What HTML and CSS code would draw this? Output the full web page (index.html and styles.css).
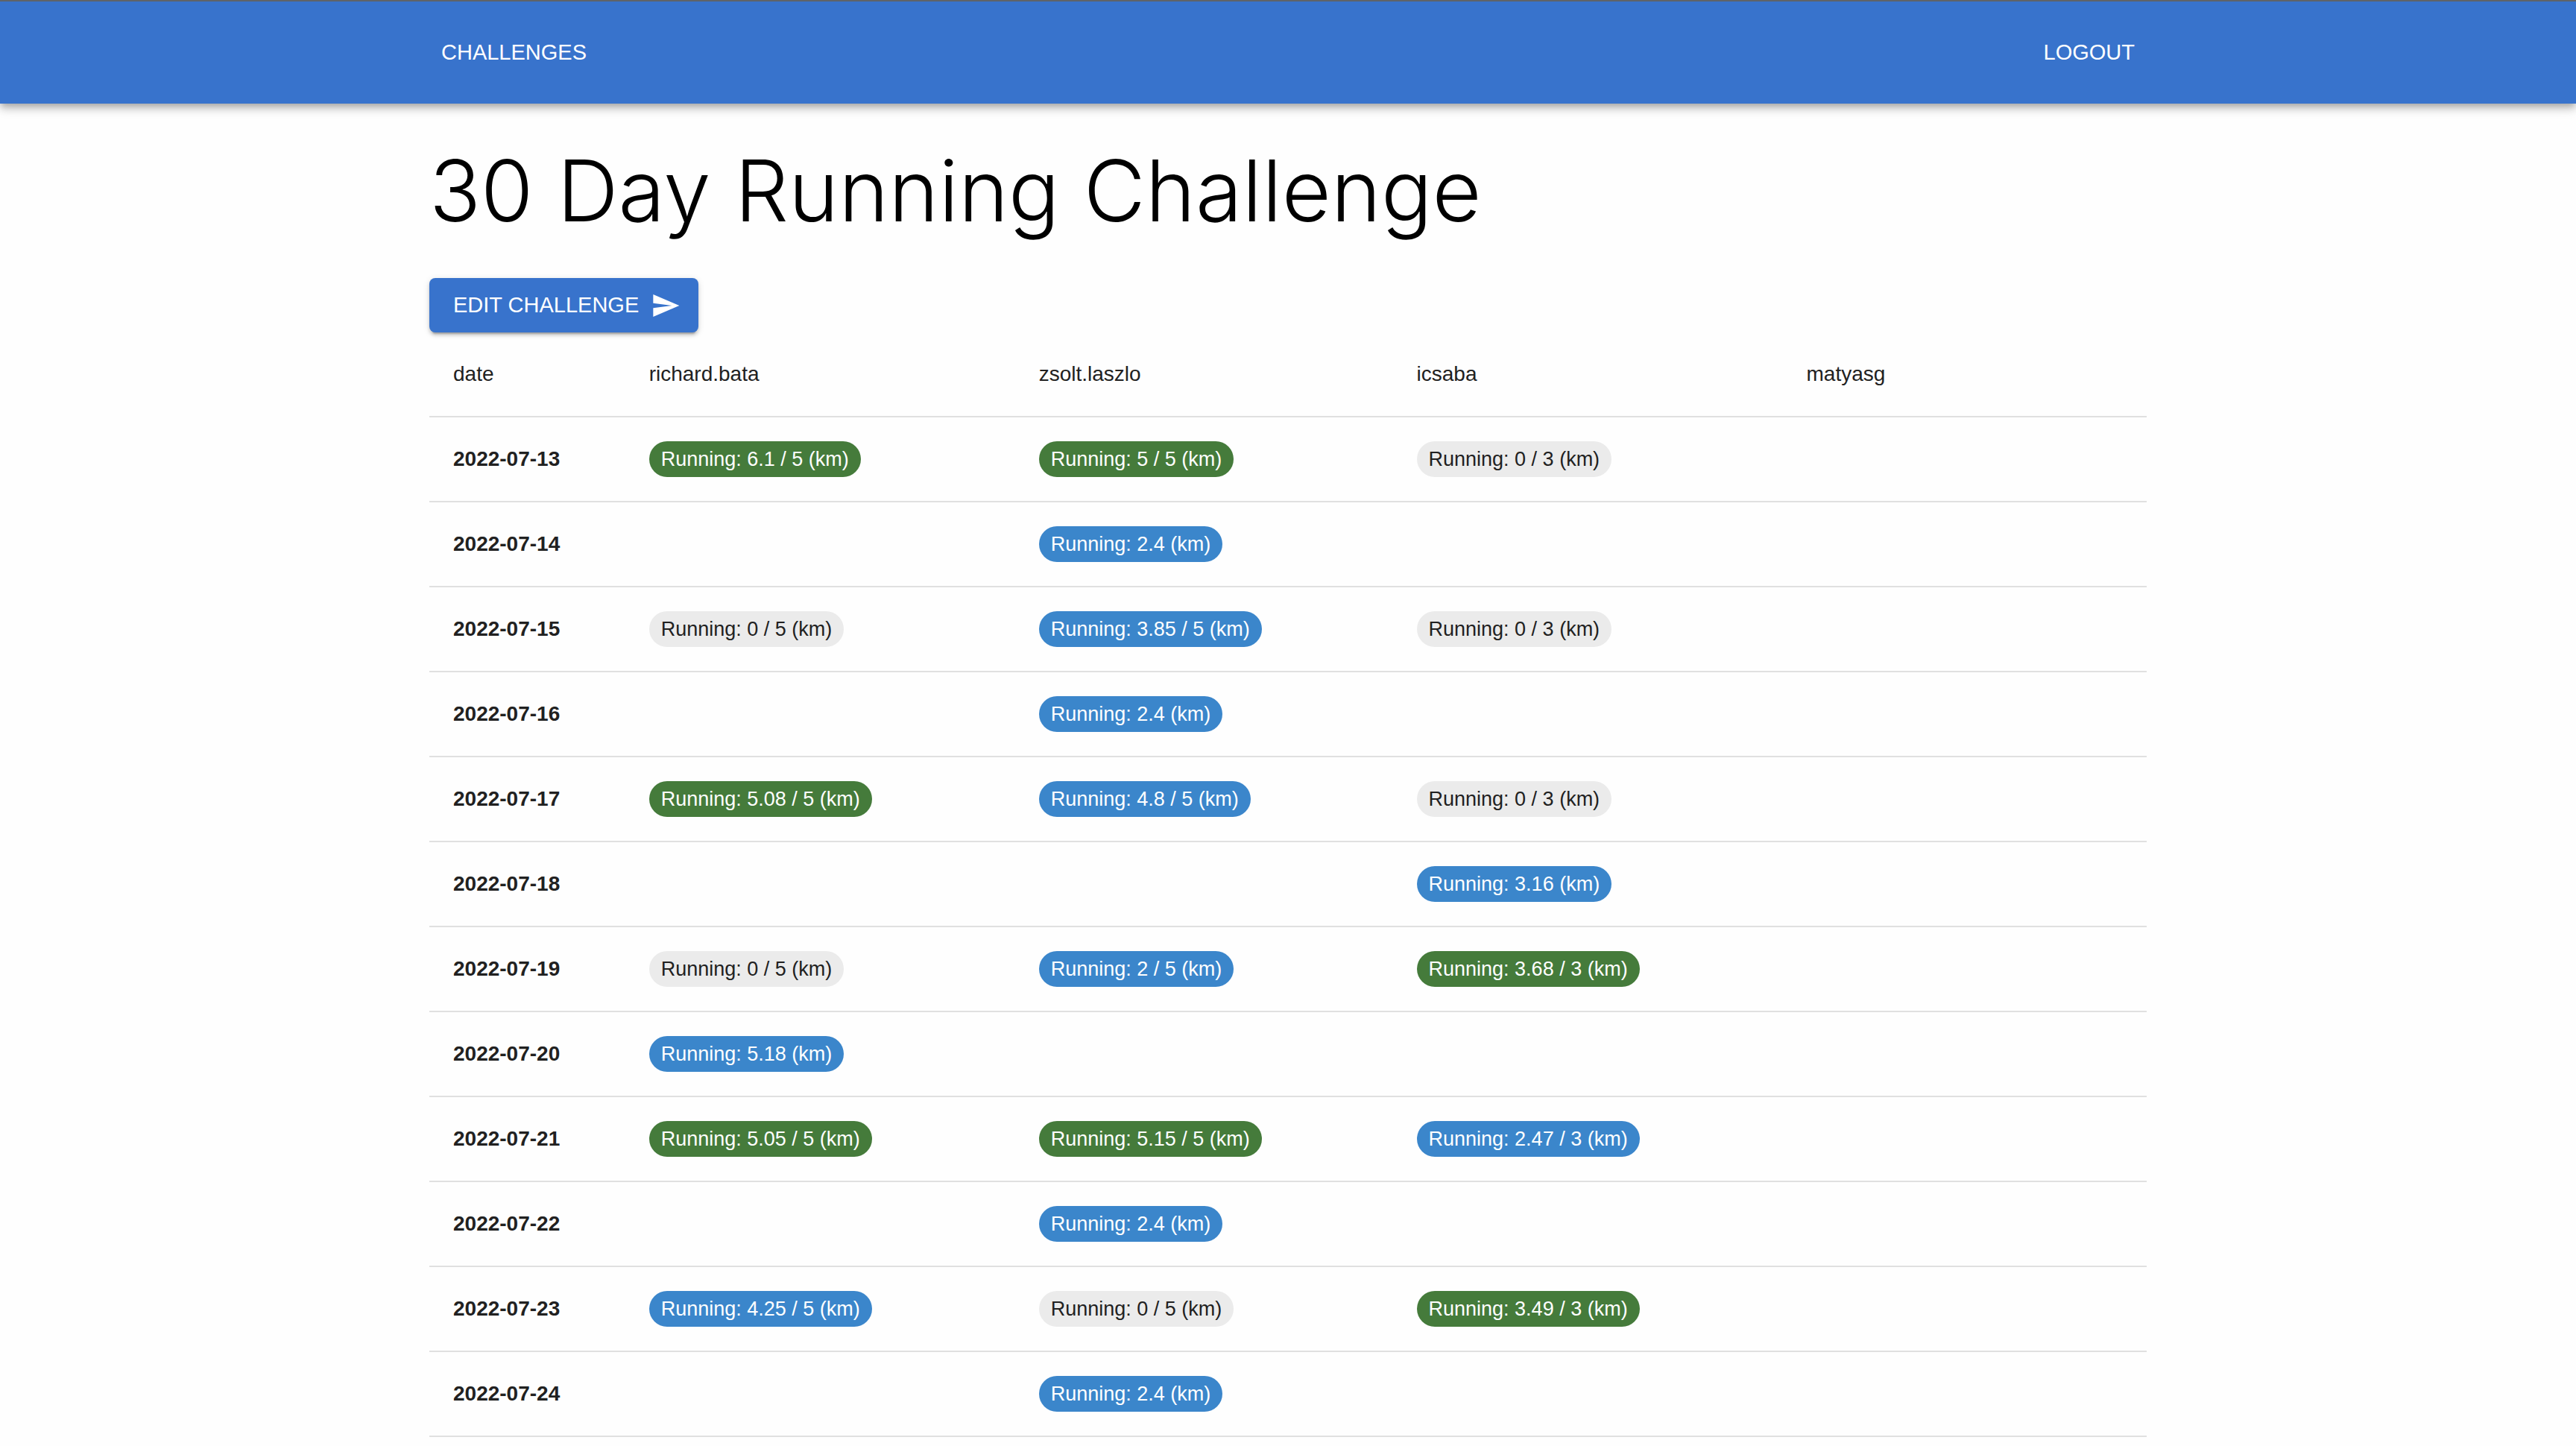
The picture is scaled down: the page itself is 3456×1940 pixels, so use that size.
FILE: index.html
```html
<!DOCTYPE html>
<html lang="en">
<head>
  <meta charset="utf-8">
  <meta name="viewport" content="width=device-width, initial-scale=1">
  <title>30 Day Running Challenge</title>
  <link rel="stylesheet" href="styles.css">
</head>
<body>
  <header class="app-bar">
    <nav class="container app-bar__nav">
      <a class="nav-link" href="#challenges">CHALLENGES</a>
      <a class="nav-link" href="#logout">LOGOUT</a>
    </nav>
  </header>
  <main class="container content">
    <h1 class="title">30 Day Running Challenge</h1>
    <button class="button" type="button">
      EDIT CHALLENGE
      <svg class="button__icon" viewBox="0 0 24 24" aria-hidden="true"><path d="M2.01 21 23 12 2.01 3 2 10l15 2-15 2z"/></svg>
    </button>
    <table class="log">
      <colgroup>
        <col class="col-date">
        <col class="col-wide">
        <col class="col-mid">
        <col class="col-wide">
        <col>
      </colgroup>
      <thead>
        <tr><th scope="col">date</th><th scope="col">richard.bata</th><th scope="col">zsolt.laszlo</th><th scope="col">icsaba</th><th scope="col">matyasg</th></tr>
      </thead>
      <tbody>
        <tr><th scope="row">2022-07-13</th><td><span class="chip chip--done">Running: 6.1 / 5 (km)</span></td><td><span class="chip chip--done">Running: 5 / 5 (km)</span></td><td><span class="chip">Running: 0 / 3 (km)</span></td><td></td></tr>
        <tr><th scope="row">2022-07-14</th><td></td><td><span class="chip chip--partial">Running: 2.4 (km)</span></td><td></td><td></td></tr>
        <tr><th scope="row">2022-07-15</th><td><span class="chip">Running: 0 / 5 (km)</span></td><td><span class="chip chip--partial">Running: 3.85 / 5 (km)</span></td><td><span class="chip">Running: 0 / 3 (km)</span></td><td></td></tr>
        <tr><th scope="row">2022-07-16</th><td></td><td><span class="chip chip--partial">Running: 2.4 (km)</span></td><td></td><td></td></tr>
        <tr><th scope="row">2022-07-17</th><td><span class="chip chip--done">Running: 5.08 / 5 (km)</span></td><td><span class="chip chip--partial">Running: 4.8 / 5 (km)</span></td><td><span class="chip">Running: 0 / 3 (km)</span></td><td></td></tr>
        <tr><th scope="row">2022-07-18</th><td></td><td></td><td><span class="chip chip--partial">Running: 3.16 (km)</span></td><td></td></tr>
        <tr><th scope="row">2022-07-19</th><td><span class="chip">Running: 0 / 5 (km)</span></td><td><span class="chip chip--partial">Running: 2 / 5 (km)</span></td><td><span class="chip chip--done">Running: 3.68 / 3 (km)</span></td><td></td></tr>
        <tr><th scope="row">2022-07-20</th><td><span class="chip chip--partial">Running: 5.18 (km)</span></td><td></td><td></td><td></td></tr>
        <tr><th scope="row">2022-07-21</th><td><span class="chip chip--done">Running: 5.05 / 5 (km)</span></td><td><span class="chip chip--done">Running: 5.15 / 5 (km)</span></td><td><span class="chip chip--partial">Running: 2.47 / 3 (km)</span></td><td></td></tr>
        <tr><th scope="row">2022-07-22</th><td></td><td><span class="chip chip--partial">Running: 2.4 (km)</span></td><td></td><td></td></tr>
        <tr><th scope="row">2022-07-23</th><td><span class="chip chip--partial">Running: 4.25 / 5 (km)</span></td><td><span class="chip">Running: 0 / 5 (km)</span></td><td><span class="chip chip--done">Running: 3.49 / 3 (km)</span></td><td></td></tr>
        <tr><th scope="row">2022-07-24</th><td></td><td><span class="chip chip--partial">Running: 2.4 (km)</span></td><td></td><td></td></tr>
      </tbody>
    </table>
  </main>
</body>
</html>
```
FILE: styles.css
```css
* {
  box-sizing: border-box;
}

body {
  margin: 0;
  background: #fefefe;
  color: #212121;
  font-family: "Liberation Sans", Arial, sans-serif;
  font-size: 28px;
  line-height: 48px;
}

.container {
  max-width: 2304px;
  margin: 0 auto;
}

.app-bar {
  padding: 32px 0;
  border-top: 2px solid #5f6368;
  background: #3873cc;
  box-shadow:
    0 4px 8px -2px rgba(0, 0, 0, 0.2),
    0 8px 10px 0 rgba(0, 0, 0, 0.14),
    0 2px 20px 0 rgba(0, 0, 0, 0.12);
}

.app-bar__nav {
  display: flex;
  justify-content: space-between;
}

.nav-link {
  padding: 12px 16px;
  color: #fff;
  font-size: 29px;
  line-height: 49px;
  text-decoration: none;
}

.content {
  padding-top: 44px;
}

.title {
  margin: 0 0 44px;
  color: #000;
  font-family: Inter, "Liberation Sans", sans-serif;
  font-size: 114px;
  font-weight: 300;
  line-height: 146px;
}

.button {
  display: flex;
  align-items: center;
  gap: 16px;
  padding: 12px 24px 12px 32px;
  border: 0;
  border-radius: 8px;
  background: #3873cc;
  color: #fff;
  font-family: inherit;
  font-size: 29px;
  line-height: 49px;
  box-shadow:
    0 6px 2px -4px rgba(0, 0, 0, 0.2),
    0 4px 4px 0 rgba(0, 0, 0, 0.14),
    0 2px 10px 0 rgba(0, 0, 0, 0.12);
  cursor: pointer;
}

.button__icon {
  width: 40px;
  height: 40px;
  fill: currentColor;
}

.log {
  width: 100%;
  border-collapse: separate;
  border-spacing: 0;
  table-layout: fixed;
}

.col-date {
  width: 11.4%;
}

.col-wide {
  width: 22.7%;
}

.col-mid {
  width: 22%;
}

.log th,
.log td {
  padding: 32px;
  border-bottom: 2px solid #e0e0e0;
  text-align: left;
  vertical-align: middle;
}

.log thead th {
  font-weight: 400;
}

.chip {
  display: block;
  width: fit-content;
  padding: 0 16px;
  border-radius: 24px;
  background: #ebebeb;
  font-size: 27px;
  line-height: 48px;
  white-space: nowrap;
}

.chip--done {
  background: #457b3b;
  color: #fff;
}

.chip--partial {
  background: #3b86cb;
  color: #fff;
}
```
